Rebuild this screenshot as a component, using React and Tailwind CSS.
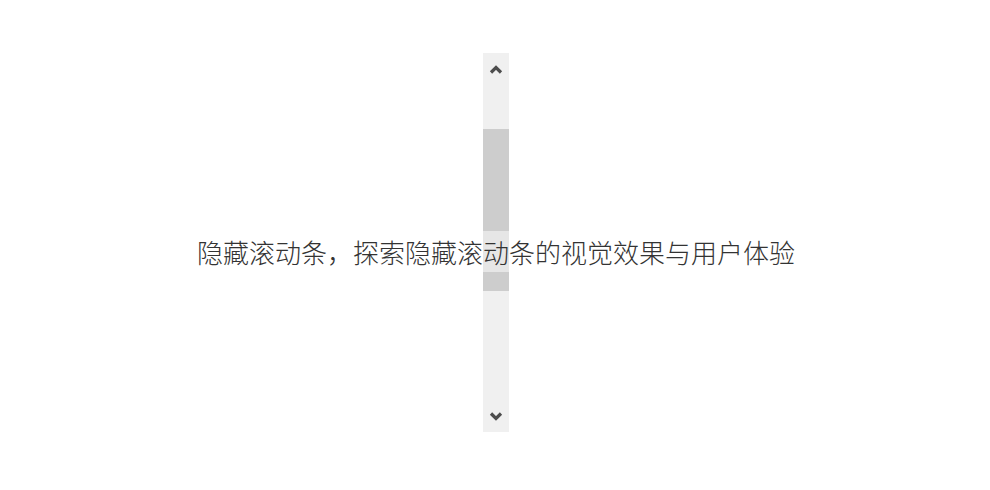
import React from "react";

// 自绘的滚动条轨道，上下箭头 + 滑块
function ScrollTrack() {
  return (
    <div className="flex flex-col items-center w-[26px] h-[379px] bg-[#f0f0f0] mt-[53px]">
      <div className="h-[34px] w-full flex items-center justify-center">
        <svg width="14" height="10" viewBox="0 0 14 10">
          <path d="M2 7.5 L7 2.5 L12 7.5" fill="none" stroke="#4d4d4d" strokeWidth="3.2" />
        </svg>
      </div>
      <div className="h-[42px]" />
      <div className="w-full h-[162px] bg-[#cdcdcd]" />
      <div className="flex-1" />
      <div className="h-[32px] w-full flex items-center justify-center">
        <svg width="14" height="10" viewBox="0 0 14 10">
          <path d="M2 2.5 L7 7.5 L12 2.5" fill="none" stroke="#4d4d4d" strokeWidth="3.2" />
        </svg>
      </div>
    </div>
  );
}

export default function App() {
  return (
    <div className="w-full h-[490px] bg-white grid">
      <div className="[grid-area:1/1] flex justify-center pl-[2px]">
        <ScrollTrack />
      </div>
      <div className="[grid-area:1/1] flex justify-center items-start pt-[231px] pl-[2px]">
        <div
          className="h-[41px] flex items-center bg-white/50 text-[26px] font-light text-[#333] leading-none"
          style={{ fontFamily: '"Noto Sans CJK SC", "Noto Sans", sans-serif' }}
        >
          隐藏滚动条，探索隐藏滚动条的视觉效果与用户体验
        </div>
      </div>
    </div>
  );
}
